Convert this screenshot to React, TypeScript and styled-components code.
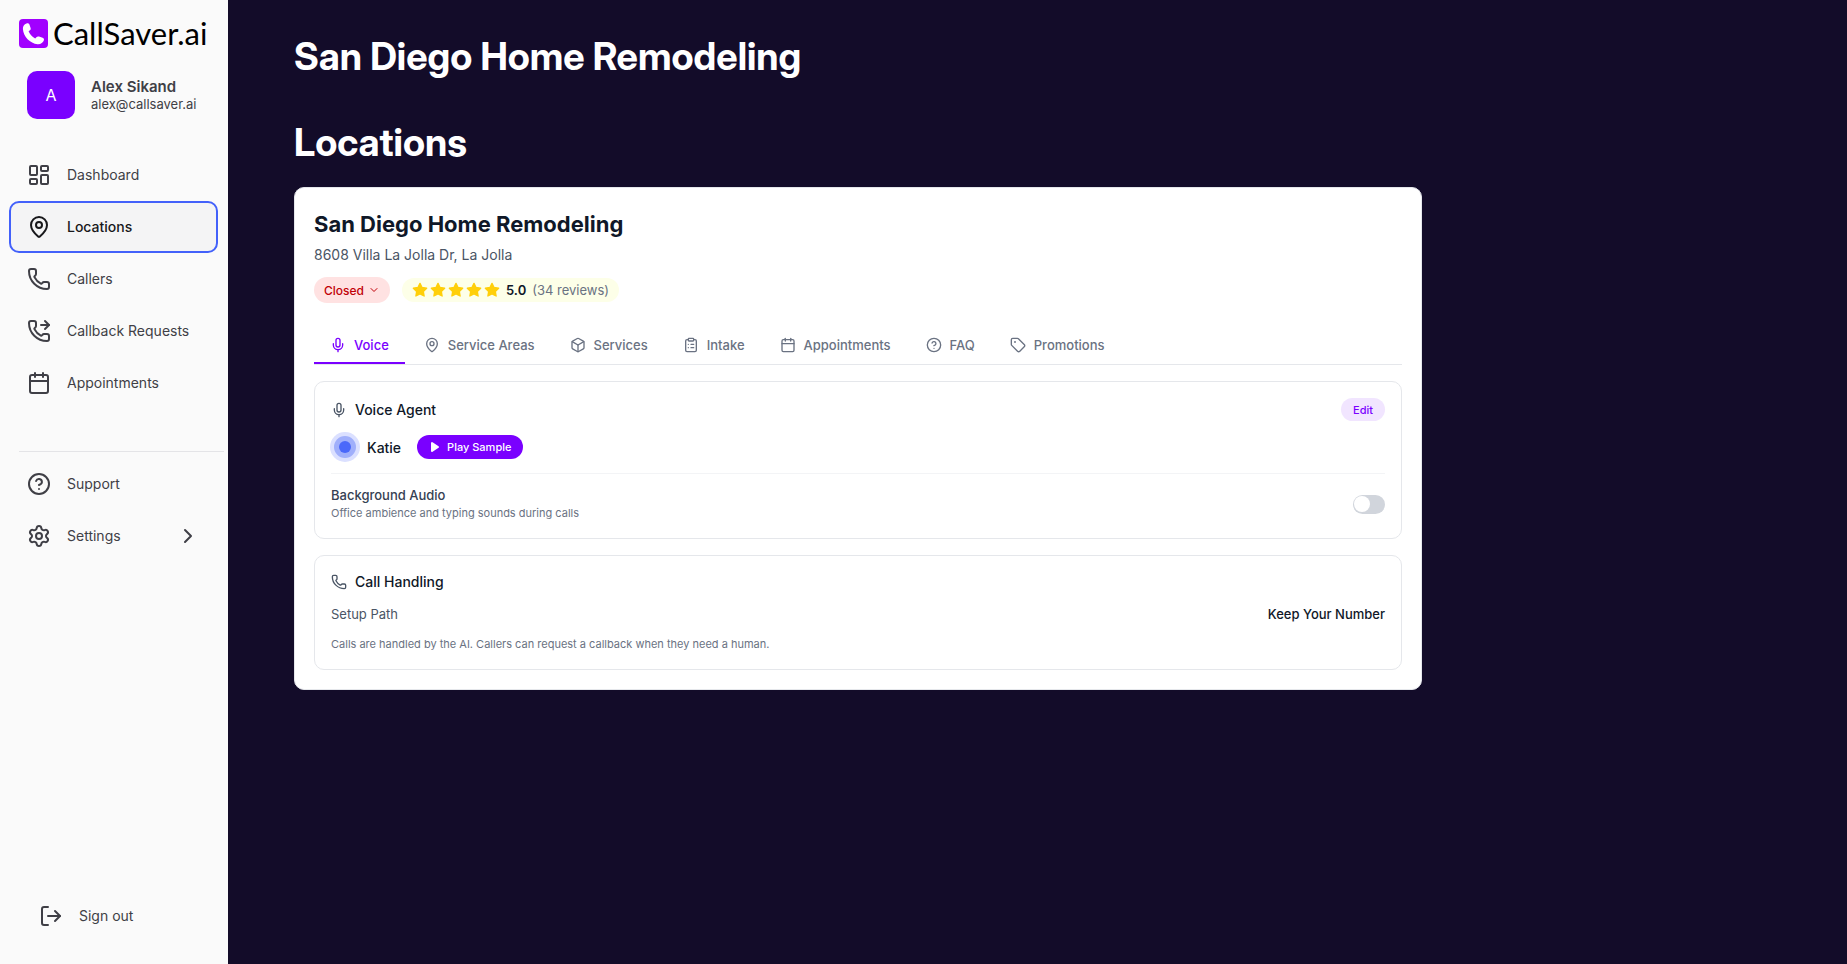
import React from 'react';
import styled, { createGlobalStyle } from 'styled-components';
import {
  Box, Calendar, ChevronDown, ChevronRight, CircleHelp, ClipboardList, LayoutDashboard,
  LogOut, MapPin, Mic, Phone, PhoneForwarded, Settings, Tag,
} from 'lucide-react';

const GlobalStyle = createGlobalStyle`
  *, *::before, *::after { box-sizing: border-box; }
  body {
    margin: 0;
    background: #130c29;
    font-family: Inter, "Liberation Sans", sans-serif;
    color: #101828;
  }
  button { font: inherit; border: 0; cursor: pointer; }
  a { color: inherit; text-decoration: none; }
  h1, h2, h3, p, ul { margin: 0; padding: 0; }
  svg { flex-shrink: 0; }
`;

const Page = styled.div`
  display: flex;
  min-height: 100vh;
`;

const Sidebar = styled.aside`
  display: flex;
  flex-direction: column;
  flex: 0 0 228px;
  padding: 17px 10px 24px 9px;
  background: #fafafa;
  color: #3f3f46;
`;

const Brand = styled.a`
  display: flex;
  align-items: center;
  gap: 5px;
  height: 32px;
  padding-left: 10px;
  color: #000;
  font-family: Lato, "Liberation Sans", sans-serif;
  font-size: 31px;
  line-height: 32px;
`;

const Profile = styled.div`
  display: flex;
  align-items: center;
  gap: 16px;
  margin-top: 22px;
  padding-left: 18px;
`;

const Avatar = styled.div`
  display: grid;
  place-items: center;
  width: 48px;
  height: 48px;
  border-radius: 10px;
  background: #7a00ff;
  color: #fff;
  font-size: 16px;
`;

const ProfileName = styled.p`
  font-size: 15px;
  font-weight: 600;
  line-height: 18px;
`;

const ProfileEmail = styled.p`
  font-size: 13px;
  line-height: 16px;
`;

const NavList = styled.ul`
  display: flex;
  flex-direction: column;
  list-style: none;
`;

const MainNav = styled(NavList)`
  margin-top: 30px;
`;

const Divider = styled.hr`
  margin: 42px -6px 6px 10px;
  border: 0;
  border-top: 1px solid #e4e4e7;
`;

const NavLink = styled.a<{ $active?: boolean }>`
  display: flex;
  align-items: center;
  gap: 16px;
  height: 52px;
  padding: 0 16px;
  border: 2px solid ${(p) => (p.$active ? '#4361fa' : 'transparent')};
  border-radius: 10px;
  background: ${(p) => (p.$active ? '#f4f4f5' : 'transparent')};
  color: ${(p) => (p.$active ? '#18181b' : '#3f3f46')};
  font-size: 14px;
  font-weight: ${(p) => (p.$active ? 500 : 400)};
  line-height: 18px;

  svg:last-child:not(:first-child) { margin-left: auto; }
`;

const SignOut = styled.button`
  display: flex;
  align-items: center;
  gap: 16px;
  height: 48px;
  margin-top: auto;
  padding: 0 30px;
  background: none;
  color: #3f3f46;
  font-size: 14px;
  line-height: 18px;
`;

const Main = styled.main`
  flex: 1;
  min-width: 0;
  padding: 32px 66px;
`;

const Content = styled.div`
  max-width: 1128px;
`;

const PageTitle = styled.h1`
  color: #fff;
  font-family: "Inter Display", Inter, sans-serif;
  font-size: 38px;
  font-weight: 700;
  line-height: 48px;
`;

const SectionTitle = styled(PageTitle).attrs({ as: 'h2' })`
  margin-top: 38px;
`;

const Card = styled.section`
  margin-top: 21px;
  padding: 19px;
  border: 1px solid #e5e7eb;
  border-radius: 10px;
  background: #fff;
`;

const CardTitle = styled.h3`
  font-size: 22px;
  font-weight: 700;
  line-height: 34px;
`;

const Address = styled.p`
  margin-top: 2px;
  color: #4a5565;
  font-size: 14px;
  line-height: 24px;
`;

const StatusRow = styled.div`
  display: flex;
  align-items: center;
  gap: 12px;
  margin-top: 10px;
`;

const StatusButton = styled.button`
  display: flex;
  align-items: center;
  gap: 4px;
  height: 26px;
  padding: 0 10px;
  border-radius: 13px;
  background: #ffe2e2;
  color: #c10007;
  font-size: 12px;
  font-weight: 500;
`;

const Rating = styled.div`
  display: flex;
  align-items: center;
  gap: 6px;
  height: 24px;
  padding: 0 10px;
  border-radius: 12px;
  background: #fdffe8;
  color: #6a7282;
  font-size: 13px;

  strong { color: #101828; font-weight: 600; }
`;

const Stars = styled.span`
  display: flex;
  gap: 2px;
`;

const TabBar = styled.div`
  display: flex;
  gap: 3px;
  margin-top: 24px;
  border-bottom: 1px solid #e5e7eb;
`;

const Tab = styled.button<{ $active?: boolean }>`
  display: flex;
  align-items: center;
  gap: 8px;
  height: 37px;
  padding: 0 16px;
  border-bottom: 2px solid ${(p) => (p.$active ? '#7a00ff' : 'transparent')};
  background: none;
  color: ${(p) => (p.$active ? '#7a00ff' : '#6a7282')};
  font-size: 13px;
  font-weight: 500;
`;

const Panel = styled.section`
  margin-top: 16px;
  padding: 16px;
  border: 1px solid #e5e7eb;
  border-radius: 10px;
`;

const Row = styled.div`
  display: flex;
  align-items: center;
  justify-content: space-between;
`;

const PanelTitle = styled.h3`
  display: flex;
  align-items: center;
  gap: 8px;
  font-size: 14px;
  font-weight: 500;
  line-height: 20px;

  svg { color: #4a5565; }
`;

const EditButton = styled.button`
  height: 23px;
  padding: 0 12px;
  border-radius: 12px;
  background: #f1e5ff;
  color: #7a00ff;
  font-size: 11px;
  font-weight: 500;
`;

const Agent = styled.div`
  display: flex;
  align-items: center;
  gap: 8px;
  margin-top: 12px;
  font-size: 14px;
  font-weight: 500;
`;

const Orb = styled.svg`
  width: 28px;
  height: 28px;
  overflow: visible;
`;

const PlayButton = styled.button`
  display: flex;
  align-items: center;
  gap: 7px;
  height: 24px;
  margin-left: 8px;
  padding: 0 12px;
  border-radius: 12px;
  background: #7a00ff;
  color: #fff;
  font-size: 11px;
  font-weight: 500;
`;

const AudioRow = styled(Row)`
  margin-top: 12px;
  padding-top: 12px;
  border-top: 1px solid #f3f4f6;
`;

const FieldLabel = styled.label`
  display: block;
  color: #364153;
  font-size: 13px;
  font-weight: 500;
  line-height: 19px;
`;

const Hint = styled.p`
  color: #6a7282;
  font-size: 11px;
  line-height: 17px;
`;

const Switch = styled.input`
  appearance: none;
  display: flex;
  width: 32px;
  height: 19px;
  margin: 0;
  padding: 1px;
  border-radius: 10px;
  background: #d1d5dc;
  cursor: pointer;

  &::before {
    content: '';
    width: 16px;
    height: 16px;
    border-radius: 50%;
    background: #fff;
  }
  &:checked { background: #7a00ff; justify-content: flex-end; }
`;

const SetupRow = styled(Row)`
  margin-top: 12px;
  color: #4a5565;
  font-size: 13px;
  line-height: 20px;

  strong { color: #101828; font-weight: 500; }
`;

const SetupHint = styled(Hint)`
  margin-top: 12px;
`;

const LogoMark = () => (
  <svg width="29" height="29" viewBox="0 0 29 29" aria-hidden="true">
    <rect width="29" height="29" rx="4" fill="#a100ff" />
    <path
      d="M7.500 4.600C9 4 10 4.600 10.500 5.800L11.600 9C12 10.200 11.600 11 10.600 11.600L9.600 12.300C10.600 15.200 13 17.800 16.200 19.400L17.400 18.200C18.200 17.400 19 17.300 20 17.600L23.600 18.800C24.900 19.300 25.200 20.200 24.900 21.300C24.200 23.800 21.600 25.400 18.600 25.200C11 24.600 4.400 17.400 3.900 10C3.800 7.200 5.200 5.400 7.500 4.600Z"
      fill="#fff"
    />
  </svg>
);

const Star = () => (
  <svg width="16" height="16" viewBox="0 0 24 24" fill="#ffcf0a" stroke="#ffcf0a" strokeWidth="2" strokeLinejoin="round" aria-hidden="true">
    <path d="M12 2l3.090 6.260L22 9.270l-5 4.870 1.180 6.880L12 17.770l-6.180 3.250L7 14.140 2 9.270l6.910-1.010L12 2z" />
  </svg>
);

const VoiceOrb = () => (
  <Orb viewBox="0 0 28 28" aria-hidden="true">
    <circle cx="14" cy="14" r="15" fill="#dbe0ff" />
    <circle cx="14" cy="14" r="11" fill="#a0affb" />
    <circle cx="14" cy="14" r="6" fill="#4a68fa" />
  </Orb>
);

const PlayIcon = () => (
  <svg width="11" height="12" viewBox="0 0 11 12" aria-hidden="true">
    <path d="M3 2v8l6-4Z" fill="#fff" stroke="#fff" strokeWidth="2" strokeLinejoin="round" />
  </svg>
);

const mainLinks = [
  { label: 'Dashboard', icon: LayoutDashboard },
  { label: 'Locations', icon: MapPin, active: true },
  { label: 'Callers', icon: Phone },
  { label: 'Callback Requests', icon: PhoneForwarded },
  { label: 'Appointments', icon: Calendar },
];

const tabs = [
  { label: 'Voice', icon: Mic, active: true },
  { label: 'Service Areas', icon: MapPin },
  { label: 'Services', icon: Box },
  { label: 'Intake', icon: ClipboardList },
  { label: 'Appointments', icon: Calendar },
  { label: 'FAQ', icon: CircleHelp },
  { label: 'Promotions', icon: Tag },
];

export default function App() {
  return (
    <>
      <GlobalStyle />
      <Page>
        <Sidebar>
          <Brand href="#"><LogoMark />CallSaver.ai</Brand>
          <Profile>
            <Avatar>A</Avatar>
            <div>
              <ProfileName>Alex Sikand</ProfileName>
              <ProfileEmail>alex@callsaver.ai</ProfileEmail>
            </div>
          </Profile>
          <nav>
            <MainNav>
              {mainLinks.map(({ label, icon: Icon, active }) => (
                <li key={label}>
                  <NavLink href="#" $active={active} aria-current={active ? 'page' : undefined}>
                    <Icon size={24} />{label}
                  </NavLink>
                </li>
              ))}
            </MainNav>
            <Divider />
            <NavList>
              <li><NavLink href="#"><CircleHelp size={24} />Support</NavLink></li>
              <li>
                <NavLink href="#">
                  <Settings size={24} />Settings
                  <ChevronRight size={24} />
                </NavLink>
              </li>
            </NavList>
          </nav>
          <SignOut type="button"><LogOut size={24} />Sign out</SignOut>
        </Sidebar>
        <Main>
          <Content>
            <PageTitle>San Diego Home Remodeling</PageTitle>
            <SectionTitle>Locations</SectionTitle>
            <Card>
              <CardTitle>San Diego Home Remodeling</CardTitle>
              <Address>8608 Villa La Jolla Dr, La Jolla</Address>
              <StatusRow>
                <StatusButton type="button">Closed<ChevronDown size={12} /></StatusButton>
                <Rating>
                  <Stars>{[1, 2, 3, 4, 5].map((n) => <Star key={n} />)}</Stars>
                  <strong>5.0</strong>
                  <span>(34 reviews)</span>
                </Rating>
              </StatusRow>
              <TabBar role="tablist">
                {tabs.map(({ label, icon: Icon, active }) => (
                  <Tab key={label} type="button" role="tab" aria-selected={!!active} $active={active}>
                    <Icon size={16} />{label}
                  </Tab>
                ))}
              </TabBar>
              <Panel>
                <Row>
                  <PanelTitle><Mic size={16} />Voice Agent</PanelTitle>
                  <EditButton type="button">Edit</EditButton>
                </Row>
                <Agent>
                  <VoiceOrb />Katie
                  <PlayButton type="button"><PlayIcon />Play Sample</PlayButton>
                </Agent>
                <AudioRow>
                  <div>
                    <FieldLabel htmlFor="background-audio">Background Audio</FieldLabel>
                    <Hint>Office ambience and typing sounds during calls</Hint>
                  </div>
                  <Switch id="background-audio" type="checkbox" role="switch" />
                </AudioRow>
              </Panel>
              <Panel>
                <PanelTitle><Phone size={16} />Call Handling</PanelTitle>
                <SetupRow><span>Setup Path</span><strong>Keep Your Number</strong></SetupRow>
                <SetupHint>Calls are handled by the AI. Callers can request a callback when they need a human.</SetupHint>
              </Panel>
            </Card>
          </Content>
        </Main>
      </Page>
    </>
  );
}
